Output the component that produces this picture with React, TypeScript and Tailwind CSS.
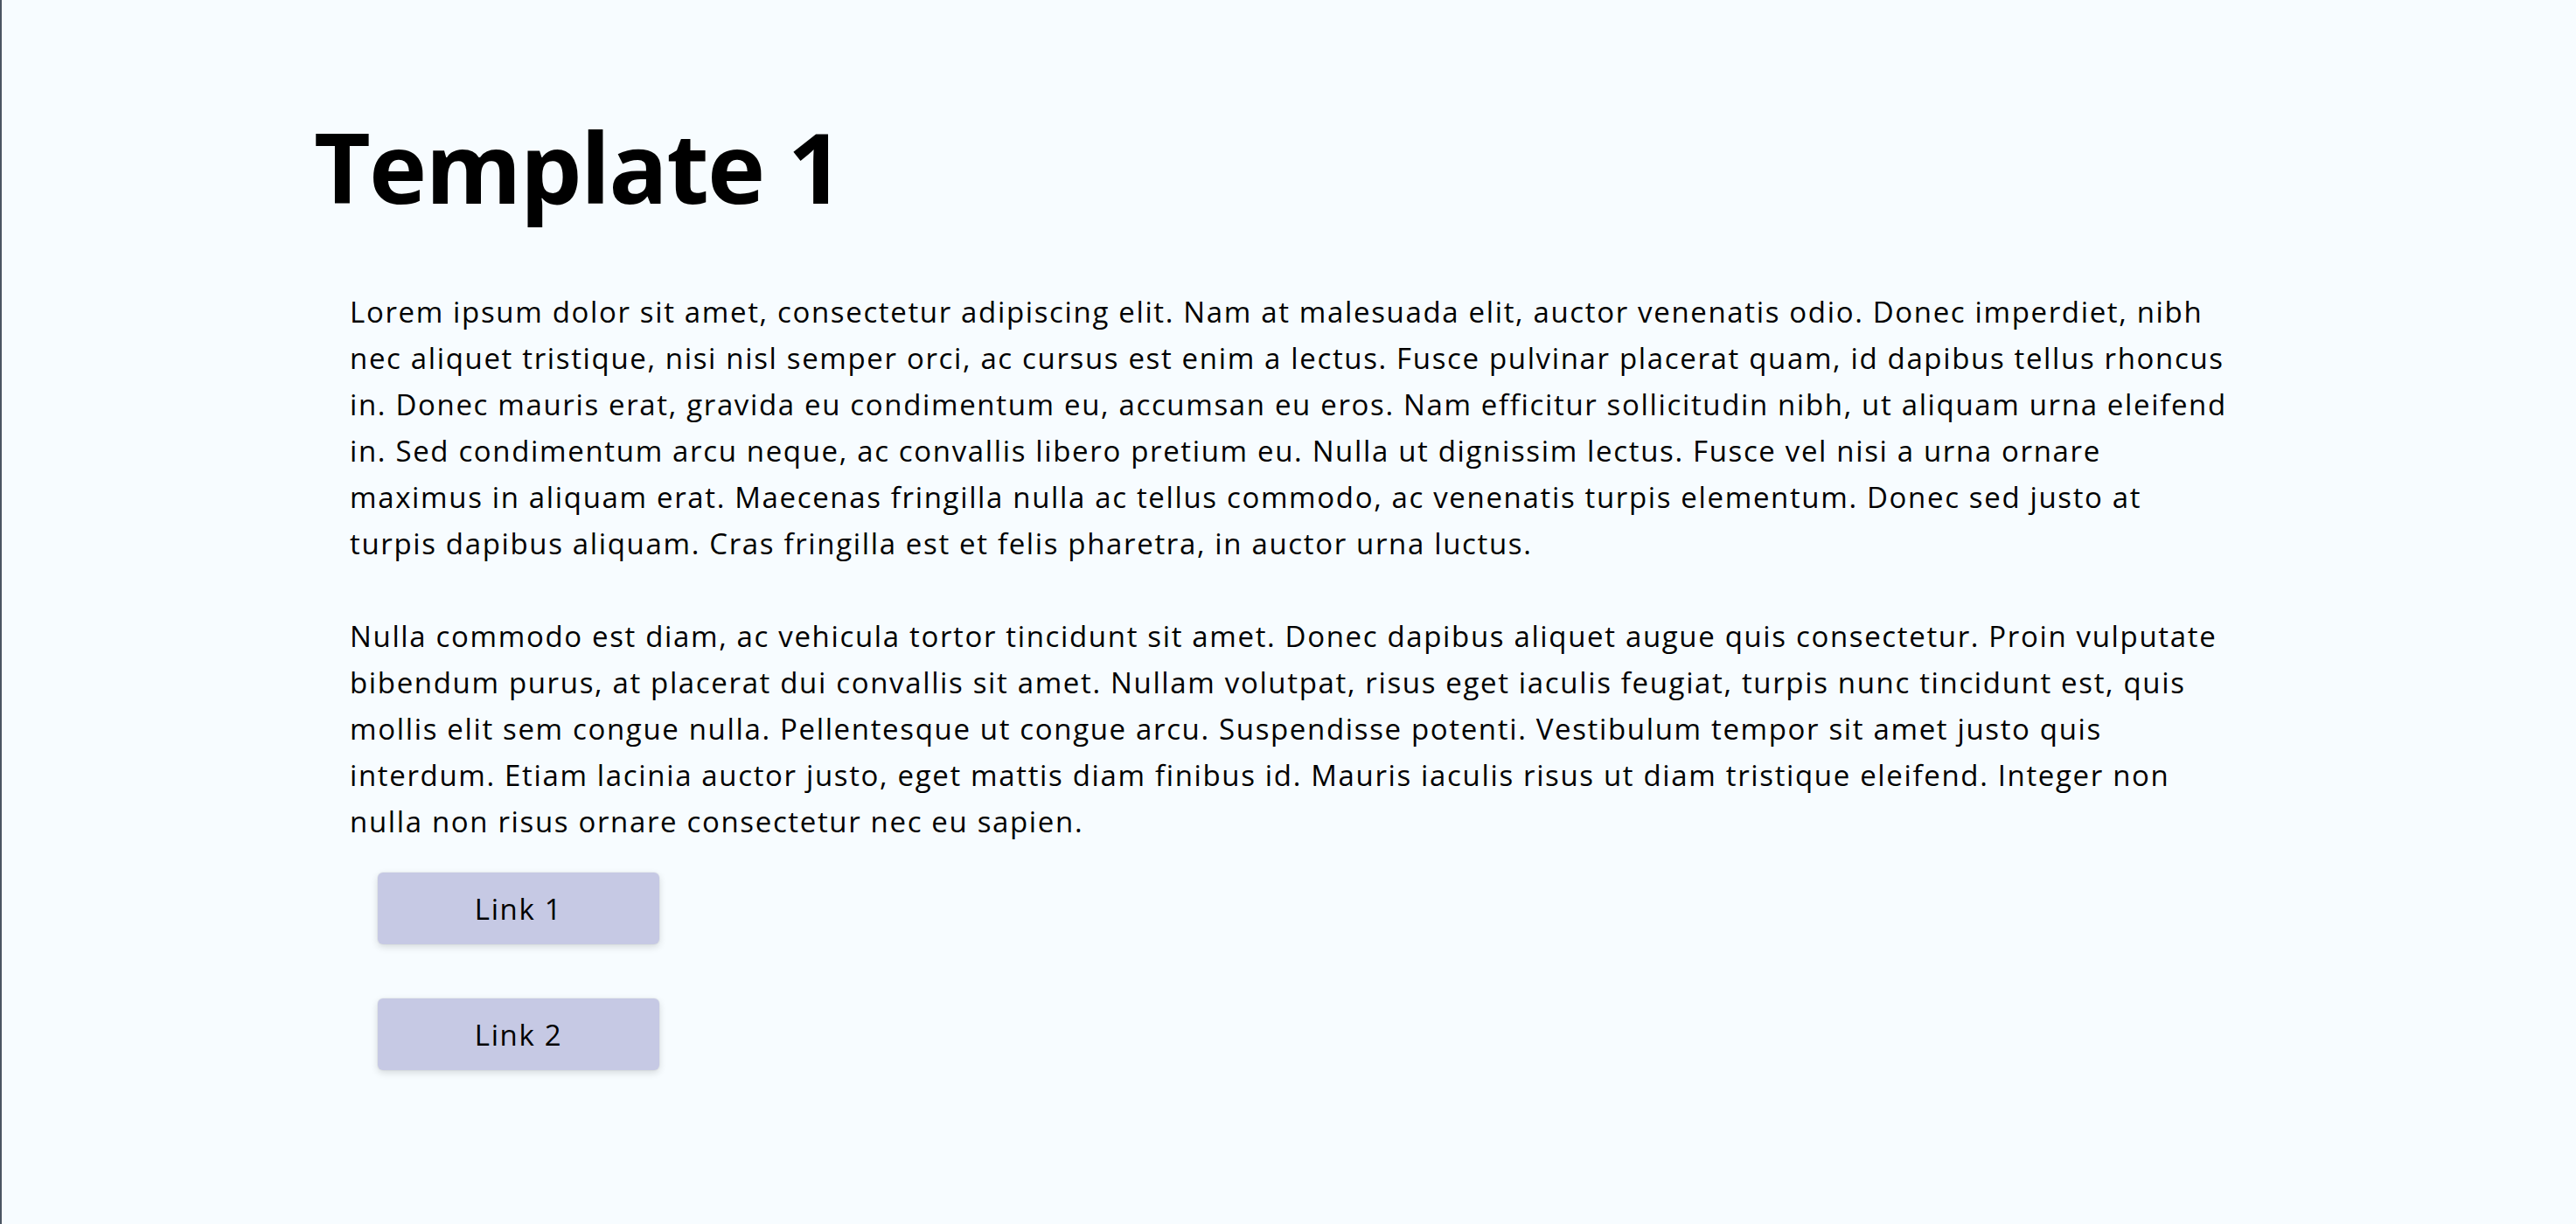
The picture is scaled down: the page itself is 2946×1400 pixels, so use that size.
import React from "react";

const p1 = [
  "Lorem ipsum dolor sit amet, consectetur adipiscing elit. Nam at malesuada elit, auctor venenatis odio. Donec imperdiet, nibh",
  "nec aliquet tristique, nisi nisl semper orci, ac cursus est enim a lectus. Fusce pulvinar placerat quam, id dapibus tellus rhoncus",
  "in. Donec mauris erat, gravida eu condimentum eu, accumsan eu eros. Nam efficitur sollicitudin nibh, ut aliquam urna eleifend",
  "in. Sed condimentum arcu neque, ac convallis libero pretium eu. Nulla ut dignissim lectus. Fusce vel nisi a urna ornare",
  "maximus in aliquam erat. Maecenas fringilla nulla ac tellus commodo, ac venenatis turpis elementum. Donec sed justo at",
  "turpis dapibus aliquam. Cras fringilla est et felis pharetra, in auctor urna luctus.",
];

const p2 = [
  "Nulla commodo est diam, ac vehicula tortor tincidunt sit amet. Donec dapibus aliquet augue quis consectetur. Proin vulputate",
  "bibendum purus, at placerat dui convallis sit amet. Nullam volutpat, risus eget iaculis feugiat, turpis nunc tincidunt est, quis",
  "mollis elit sem congue nulla. Pellentesque ut congue arcu. Suspendisse potenti. Vestibulum tempor sit amet justo quis",
  "interdum. Etiam lacinia auctor justo, eget mattis diam finibus id. Mauris iaculis risus ut diam tristique eleifend. Integer non",
  "nulla non risus ornare consectetur nec eu sapien.",
];

function Para({ lines, className }: { lines: string[]; className?: string }) {
  return (
    <p className={className}>
      {lines.map((l, i) => (
        <span key={i} className="block whitespace-nowrap">
          {l}
        </span>
      ))}
    </p>
  );
}

export default function App() {
  return (
    <div className="min-h-screen bg-[#f7fcff] border-l-2 border-[#4b5563] font-['Open_Sans',sans-serif] text-black">
      <div className="pl-[357px] pt-[120px]">
        <h1 className="text-[112px] font-bold leading-[140px] tracking-[-1.75px]">Template 1</h1>
        <div className="ml-[41px] mt-[70px] text-[33px] leading-[53px] tracking-[1.65px]">
          <Para lines={p1} />
          <Para lines={p2} className="mt-[53px]" />
          <div className="ml-[32px] mt-[32px] flex flex-col gap-[62px]">
            <a className="flex h-[82px] w-[322px] items-center justify-center rounded-[6px] bg-[#c6c9e4] text-[33px] shadow-[0_3px_8px_rgba(0,0,0,0.14),0_0_0_1px_rgba(0,0,0,0.03)]">
              Link 1
            </a>
            <a className="flex h-[82px] w-[322px] items-center justify-center rounded-[6px] bg-[#c6c9e4] text-[33px] shadow-[0_3px_8px_rgba(0,0,0,0.14),0_0_0_1px_rgba(0,0,0,0.03)]">
              Link 2
            </a>
          </div>
        </div>
      </div>
    </div>
  );
}
